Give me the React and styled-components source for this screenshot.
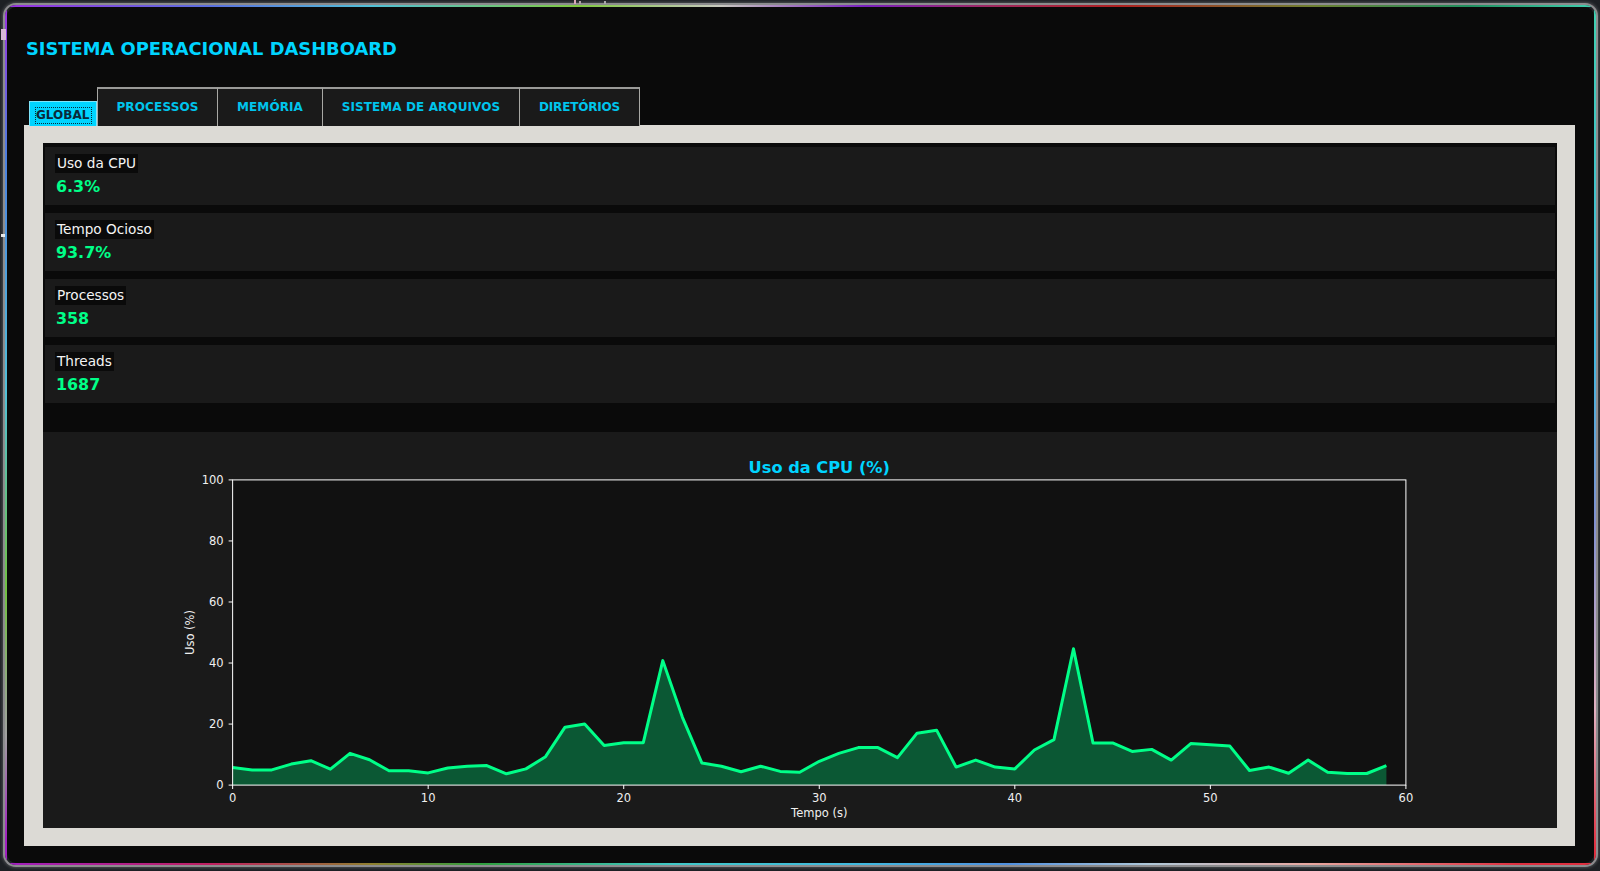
import React from "react";
import styled, { createGlobalStyle } from "styled-components";

const GlobalStyle = createGlobalStyle`
  html, body {
    margin: 0;
    padding: 0;
    background: #1d2024;
  }
  * {
    box-sizing: border-box;
  }
`;

const Screen = styled.div`
  position: relative;
  width: 1600px;
  height: 871px;
  padding: 5px 4px 6px 5px;
  font-family: "DejaVu Sans", sans-serif;
  overflow: hidden;
`;

/* small bright specks that sit on the outer edge of the window */
const EdgeSpeck = styled.span`
  position: absolute;
  left: ${(props) => props.$x}px;
  top: ${(props) => props.$y}px;
  width: ${(props) => props.$w}px;
  height: ${(props) => props.$h}px;
  background: ${(props) => props.$color};
`;

/* the rainbow line around the window, one gradient per side */
const Frame = styled.div`
  height: 100%;
  padding: 2px;
  border-radius: 11px;
  box-shadow: 0 0 0 2px #8c8c8e, 0 0 3px 3px #4a4c50;
  background:
    linear-gradient(90deg, #9a30e0, #5a70e0 13%, #50c0d8 23%, #80c840 36%, #c8c8c0 45%, #7a20c0 54%, #a02860 62%, #b02020 70%, #708030 82%, #209060 92%, #40d0b0) top / 100% 2px no-repeat,
    linear-gradient(90deg, #a020c0, #c02060 13%, #908030 23%, #30a040 30%, #40c8c8 42%, #40b8e0 54%, #5090e0 63%, #b0c8d8 72%, #e8a8a0 82%, #e03040 95%, #e03040) bottom / 100% 2px no-repeat,
    linear-gradient(180deg, #9a30e0, #4a80e0 18%, #50c0d8 45%, #70c040 68%, #a0a0a0 85%, #a020c0 97%) left / 2px 100% no-repeat,
    linear-gradient(180deg, #40d0b0, #40b8e0 40%, #8090d0 60%, #e0b0c0 82%, #e03040 98%) right / 2px 100% no-repeat;
`;

const Window = styled.div`
  height: 100%;
  padding: 0 19px 17px 17px;
  display: flex;
  flex-direction: column;
  border-radius: 9px;
  background: #0a0a0a;
`;

const Title = styled.h1`
  margin: 0;
  padding-top: 31px;
  height: 80px;
  padding-left: 2px;
  font-size: 17.85px;
  line-height: 22px;
  font-weight: bold;
  color: #00d4ff;
`;

const TabBar = styled.div`
  display: flex;
  align-items: flex-end;
  height: 39px;
  padding-left: 5px;
  margin-bottom: -1px;
  position: relative;
  z-index: 1;
`;

const Tab = styled.div`
  width: ${(props) => props.$width}px;
  height: 39px;
  padding-top: 11px;
  background: #1a1a1a;
  border: 1px solid #a8a8a4;
  border-top: 2px solid #9a9a98;
  border-bottom: none;
  border-left-width: ${(props) => (props.$first ? "1px" : "0")};
  font-size: 12px;
  line-height: 14px;
  font-weight: bold;
  letter-spacing: ${(props) => props.$spacing}px;
  text-align: center;
  color: #00c4ec;
  white-space: nowrap;
`;

const ActiveTab = styled.div`
  height: 25px;
  width: 68px;
  padding: 6px 5px 0 6px;
  background: #00d4ff;
  border: 1px solid #7fe4fa;
  border-bottom: none;
  font-size: 12px;
  line-height: 15px;
  font-weight: bold;
  color: #0a2a3a;
`;

const FocusMark = styled.span`
  display: block;
  outline: 1px dotted #0a2a3a;
  white-space: nowrap;
`;

const Panel = styled.div`
  flex: 1;
  min-height: 0;
  padding: 18px 18px 18px 19px;
  background: #dcdad5;
`;

const Content = styled.div`
  height: 100%;
  padding-top: 4px;
  display: flex;
  flex-direction: column;
  background: #0a0a0a;
`;

const Cards = styled.div`
  display: flex;
  flex-direction: column;
  gap: 8px;
  padding: 0 2px;
`;

const Card = styled.div`
  height: 58px;
  padding: 7px 10px 0;
  background: #1a1a1a;
`;

const CardLabel = styled.div`
  display: table;
  padding: 0 2px;
  background: #0a0a0a;
  color: #f4f4f4;
  font-size: 13.65px;
  line-height: 19px;
`;

const CardValue = styled.div`
  margin-top: 4px;
  padding-left: 1px;
  color: #00ff88;
  font-size: 15.9px;
  line-height: 19px;
  font-weight: bold;
`;

const ChartBox = styled.div`
  flex: 1;
  min-height: 0;
  margin-top: 29px;
  background: #1a1a1a;
`;

const ChartSvg = styled.svg`
  display: block;
  width: 100%;
  height: 100%;
  font-family: "DejaVu Sans", sans-serif;
`;

const tabs = [
  { label: "PROCESSOS", width: 121, spacing: 0.15 },
  { label: "MEMÓRIA", width: 105, spacing: 0.1 },
  { label: "SISTEMA DE ARQUIVOS", width: 197, spacing: 0.1 },
  { label: "DIRETÓRIOS", width: 120, spacing: -0.2 },
];

const cards = [
  { label: "Uso da CPU", value: "6.3%" },
  { label: "Tempo Ocioso", value: "93.7%" },
  { label: "Processos", value: "358" },
  { label: "Threads", value: "1687" },
];

const specks = [
  { x: 1, y: 29, w: 5, h: 11, color: "#d8b8d8" },
  { x: 1, y: 234, w: 4, h: 3, color: "#e8e8e8" },
  { x: 574, y: 0, w: 2, h: 4, color: "#d8a8b8" },
  { x: 579, y: 1, w: 2, h: 3, color: "#b0a0a8" },
  { x: 604, y: 1, w: 2, h: 3, color: "#a8a8a8" },
];

const cpu = [
  5.8, 5, 5, 6.9, 8, 5.2, 10.4, 8.3, 4.7, 4.7, 4, 5.6, 6.2, 6.4, 3.7, 5.3, 9.3, 19, 20, 13,
  13.9, 13.9, 40.8, 22.2, 7.2, 6.2, 4.4, 6.2, 4.5, 4.2, 7.8, 10.4, 12.3, 12.3, 9, 17, 18, 5.9, 8.2, 5.9,
  5.3, 11.5, 14.9, 44.7, 13.8, 13.8, 11, 11.7, 8.2, 13.6, 13.2, 12.8, 4.8, 5.9, 3.9, 8.2, 4.2, 3.8, 3.8, 6.4,
];

// svg coordinates are page pixels minus the chart box origin
const originX = 43;
const originY = 432;
const left = 232.5 - originX;
const right = 1405 - originX;
const top = 479.5 - originY;
const bottom = 784.5 - originY;
const px = (t) => left + (t / 60) * (right - left);
const py = (v) => bottom - (v / 100) * (bottom - top);

const line = cpu.map((v, i) => `${px(i).toFixed(1)},${py(v).toFixed(1)}`).join(" ");
const area = `${px(0)},${bottom} ${line} ${px(59).toFixed(1)},${bottom}`;

const CpuChart = () => (
  <ChartSvg viewBox="0 0 1513 395">
    <rect x={left} y={top} width={right - left} height={bottom - top} fill="#111111" />
    <polygon points={area} fill="#00ff88" fillOpacity="0.3" />
    <polyline points={line} fill="none" stroke="#00ff88" strokeWidth="3" strokeLinejoin="round" />
    <rect x={left} y={top} width={right - left} height={bottom - top} fill="none" stroke="#ffffff" strokeWidth="1" />
    {[0, 20, 40, 60, 80, 100].map((v) => (
      <g key={v}>
        <line x1={left - 4} x2={left} y1={py(v)} y2={py(v)} stroke="#ffffff" strokeWidth="1" />
        <text x={left - 9} y={py(v) + 4} fill="#f0f0f0" fontSize="11.5" textAnchor="end">
          {v}
        </text>
      </g>
    ))}
    {[0, 10, 20, 30, 40, 50, 60].map((t) => (
      <g key={t}>
        <line x1={px(t)} x2={px(t)} y1={bottom} y2={bottom + 4} stroke="#ffffff" strokeWidth="1" />
        <text x={px(t)} y={bottom + 17} fill="#f0f0f0" fontSize="11.5" textAnchor="middle">
          {t}
        </text>
      </g>
    ))}
    <text x={(left + right) / 2} y={top - 7} fill="#00d4ff" fontSize="16.2" fontWeight="bold" textAnchor="middle">
      Uso da CPU (%)
    </text>
    <text x={(left + right) / 2} y={bottom + 32} fill="#f0f0f0" fontSize="11.5" textAnchor="middle">
      Tempo (s)
    </text>
    <text
      transform={`translate(${left - 39} ${(top + bottom) / 2}) rotate(-90)`}
      fill="#f0f0f0"
      fontSize="11.5"
      textAnchor="middle"
    >
      Uso (%)
    </text>
  </ChartSvg>
);

const App = () => (
  <Screen>
    <GlobalStyle />
    <Frame>
      <Window>
        <Title>SISTEMA OPERACIONAL DASHBOARD</Title>
        <TabBar>
          <ActiveTab>
            <FocusMark>GLOBAL</FocusMark>
          </ActiveTab>
          {tabs.map((tab, index) => (
            <Tab key={tab.label} $first={index === 0} $width={tab.width} $spacing={tab.spacing}>
              {tab.label}
            </Tab>
          ))}
        </TabBar>
        <Panel>
          <Content>
            <Cards>
              {cards.map((card) => (
                <Card key={card.label}>
                  <CardLabel>{card.label}</CardLabel>
                  <CardValue>{card.value}</CardValue>
                </Card>
              ))}
            </Cards>
            <ChartBox>
              <CpuChart />
            </ChartBox>
          </Content>
        </Panel>
      </Window>
    </Frame>
    {specks.map((speck) => (
      <EdgeSpeck key={`${speck.x}-${speck.y}`} $x={speck.x} $y={speck.y} $w={speck.w} $h={speck.h} $color={speck.color} />
    ))}
  </Screen>
);

export default App;
